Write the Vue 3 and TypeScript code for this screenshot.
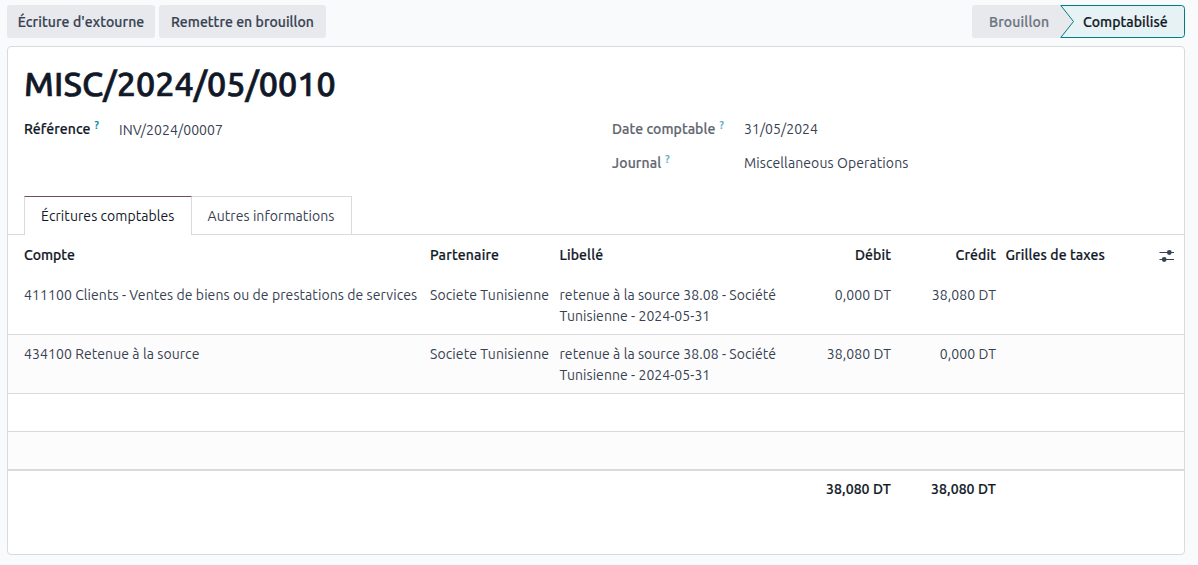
<script setup lang="ts">
interface Line {
  account: string
  partner: string
  label: string
  debit: string
  credit: string
}

const lines: Line[] = [
  {
    account: '411100 Clients - Ventes de biens ou de prestations de services',
    partner: 'Societe Tunisienne',
    label: 'retenue à la source 38.08 - Société Tunisienne - 2024-05-31',
    debit: '0,000 DT',
    credit: '38,080 DT',
  },
  {
    account: '434100 Retenue à la source',
    partner: 'Societe Tunisienne',
    label: 'retenue à la source 38.08 - Société Tunisienne - 2024-05-31',
    debit: '38,080 DT',
    credit: '0,000 DT',
  },
]
const total = { debit: '38,080 DT', credit: '38,080 DT' }
</script>

<template>
  <div class="page">
    <header class="bar">
      <div class="actions">
        <button class="btn reverse">Écriture d'extourne</button>
        <button class="btn draft">Remettre en brouillon</button>
      </div>
      <div class="status">
        <div class="step">Brouillon</div>
        <div class="step current">
          <svg class="shape" width="125" height="33" viewBox="0 0 125 33">
            <path d="M.8 .5H121.5a3 3 0 0 1 3 3V29.500a3 3 0 0 1-3 3H.8L13.500 16.500Z" fill="#e6f2f3" stroke="#017e84" />
          </svg>
          <span class="step-text">Comptabilisé</span>
        </div>
      </div>
    </header>

    <main class="sheet">
      <h1 class="title">MISC/2024/05/0010</h1>

      <div class="fields">
        <div class="group">
          <div class="field main-field">
            <label class="name">Référence<sup>?</sup></label>
            <span class="value">INV/2024/00007</span>
          </div>
        </div>
        <div class="group right">
          <div class="field">
            <label class="name date">Date comptable<sup>?</sup></label>
            <span class="value digits">31/05/2024</span>
          </div>
          <div class="field">
            <label class="name journal">Journal<sup>?</sup></label>
            <span class="value journal-value">Miscellaneous Operations</span>
          </div>
        </div>
      </div>

      <nav class="tabs">
        <a class="tab active">Écritures comptables</a>
        <a class="tab">Autres informations</a>
      </nav>

      <div class="table">
        <div class="row head">
          <span class="plain">Compte</span>
          <span class="partner-head">Partenaire</span>
          <span>Libellé</span>
          <span class="num">Débit</span>
          <span class="num">Crédit</span>
          <span class="taxes">Grilles de taxes</span>
          <svg class="toggle" width="16" height="14" viewBox="0 0 16 14">
            <path d="M.5 4.500H15M.5 11.500H15" stroke="#374151" stroke-width="1.100" />
            <circle cx="10.300" cy="4.500" r="2.400" fill="#374151" />
            <circle cx="5.200" cy="11.500" r="2.400" fill="#374151" />
          </svg>
        </div>
        <div v-for="(line, i) in lines" :key="i" class="row line">
          <span class="account">{{ line.account }}</span>
          <span class="partner">{{ line.partner }}</span>
          <span class="label">{{ line.label }}</span>
          <span class="num">{{ line.debit }}</span>
          <span class="num">{{ line.credit }}</span>
        </div>
        <div class="row empty"></div>
        <div class="row empty last"></div>
        <div class="row foot">
          <span class="num total">{{ total.debit }}</span>
          <span class="num">{{ total.credit }}</span>
        </div>
      </div>
    </main>
  </div>
</template>

<style>
body {
  background: #f9fafb;
}
</style>

<style scoped>
* {
  box-sizing: border-box;
}
.page {
  height: 565px;
  padding: 5px 13px 10px 7px;
  display: flex;
  flex-direction: column;
  font: 14px/21px Ubuntu, "Noto Sans", sans-serif;
  letter-spacing: 0.07px;
  color: #374151;
}
.bar {
  display: flex;
  justify-content: space-between;
  height: 33px;
  margin-bottom: 8px;
}
.actions {
  display: flex;
  gap: 4px;
}
.btn {
  height: 33px;
  padding: 2px 0 0;
  border: 0;
  border-radius: 3px;
  background: #e7e9ed;
  color: #374151;
  font: inherit;
  font-weight: 500;
  text-align: center;
}
.btn,
.status,
.name,
.head,
.foot {
  -webkit-text-stroke: 0.2px currentColor;
}
.reverse {
  width: 148px;
  letter-spacing: 0.12px;
}
.draft {
  width: 167px;
  letter-spacing: 0.06px;
}
.status {
  display: flex;
  width: 213px;
  font-weight: 500;
}
.step {
  flex: 0 0 102px;
  padding-left: 17px;
  line-height: 35px;
  border-radius: 3px 0 0 3px;
  background: #e7e9ed;
  color: #6b7280;
  letter-spacing: 0.17px;
}
.step.current {
  position: relative;
  flex: 0 0 125px;
  margin-left: -14px;
  padding-left: 23px;
  background: none;
  color: #111827;
  letter-spacing: 0.07px;
}
.shape {
  position: absolute;
  left: 0;
  top: 0;
}
.step-text {
  position: relative;
}
.sheet {
  flex: 1;
  border: 1px solid #d8dadd;
  border-radius: 4px;
  background: #fff;
}
.title {
  margin: 16px 0 0 16px;
  font-size: 34px;
  line-height: 40px;
  font-weight: 500;
  letter-spacing: 0.07px;
  color: #111827;
  -webkit-text-stroke: 0.7px currentColor;
}
.fields {
  display: flex;
  height: 93px;
  padding: 16px 16px 0;
}
.group {
  flex: 0 0 588px;
}
.group.right {
  flex: 1;
}
.field {
  display: flex;
  height: 34px;
}
.name {
  flex: 0 0 132px;
  font-weight: 500;
  color: #5f6570;
  letter-spacing: 0.07px;
}
.main-field .name {
  flex-basis: 95px;
  color: #111827;
}
.main-field .value {
  padding-top: 1px;
}
.journal {
  letter-spacing: 0.15px;
}
.digits {
  letter-spacing: 0.05px;
}
.journal-value {
  letter-spacing: 0.1px;
}
sup {
  margin-left: 4px;
  font-size: 10.5px;
  line-height: 0;
  vertical-align: 5px;
  color: #58abc4;
}
.main-field sup {
  color: #01809f;
}
.tabs {
  display: flex;
  height: 39px;
  padding-left: 16px;
  border-bottom: 1px solid #d8dadd;
}
.tab {
  width: 160px;
  height: 38px;
  padding-left: 15.5px;
  line-height: 38px;
  border: 1px solid #d8dadd;
  border-left: 0;
  border-bottom: 0;
}
.tab.active {
  width: 168px;
  height: 39px;
  padding-left: 16px;
  border-left: 1px solid #d8dadd;
  border-top-color: #714b67;
  background: #fff;
  color: #111827;
}
.row {
  display: grid;
  grid-template-columns: 406px 129.5px 227px 104.5px 105px 153.5px 1fr;
  padding: 9px 0 7px 16px;
  border-bottom: 1px solid #d8dadd;
}
.head {
  height: 41px;
  padding-top: 10px;
  border: 0;
  font-weight: 500;
  color: #111827;
  letter-spacing: 0.12px;
}
.plain {
  letter-spacing: 0;
}
.partner-head {
  letter-spacing: 0.2px;
}
.taxes {
  padding-left: 9.5px;
}
.toggle {
  align-self: start;
  margin: 3px 0 0 9px;
}
.line {
  height: 59px;
}
.account {
  letter-spacing: 0.08px;
}
.partner {
  letter-spacing: 0.1px;
}
.label {
  padding-right: 8px;
  letter-spacing: 0.06px;
}
.num {
  text-align: right;
}
.line:nth-child(odd),
.empty.last {
  background: #fcfcfc;
}
.empty {
  height: 38px;
}
.empty.last {
  height: 39px;
  border-bottom-width: 2px;
}
.foot {
  padding-top: 8px;
  border: 0;
  font-weight: 500;
  color: #111827;
  letter-spacing: 0.1px;
}
.total {
  grid-column: 4;
}
</style>
